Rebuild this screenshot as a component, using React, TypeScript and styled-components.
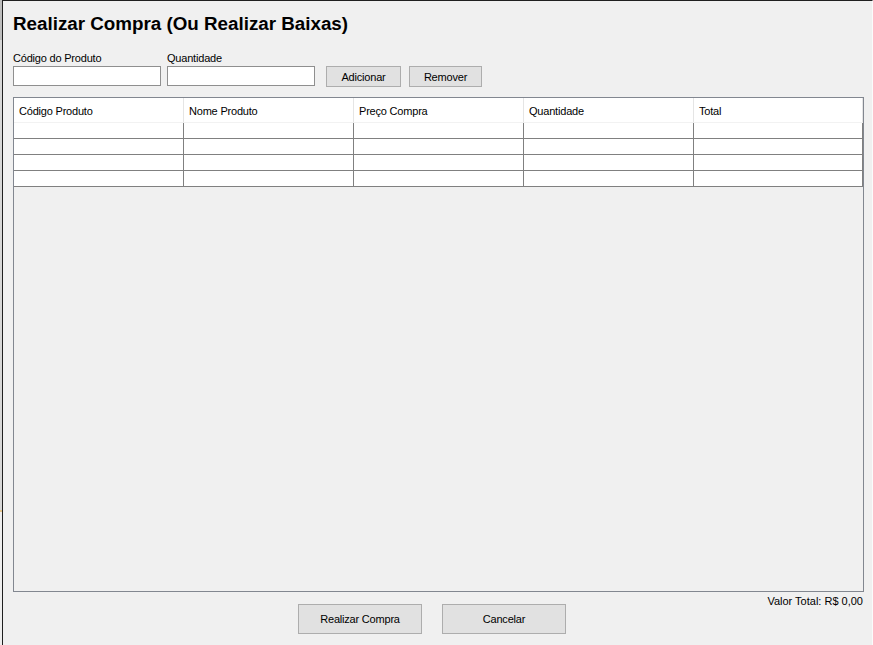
import React from 'react'
import styled, { createGlobalStyle } from 'styled-components'

const GlobalStyle = createGlobalStyle`
  html, body {
    margin: 0;
    padding: 0;
    background: #f0f0f0;
  }
  body {
    font-family: 'Liberation Sans', Arial, sans-serif;
    font-size: 11px;
    color: #000;
  }
`

const columns = ['Código Produto', 'Nome Produto', 'Preço Compra', 'Quantidade', 'Total']
const emptyRows = [0, 1, 2, 3]

const Desktop = styled.div`
  display: flex;
  width: 873px;
  height: 645px;
  overflow: hidden;
`

const Sliver = styled.div`
  width: 2px;
  background: linear-gradient(
    to bottom,
    #bdbdbd 0,
    #bdbdbd 40px,
    #d6d6d6 40px,
    #d6d6d6 510px,
    #e6c48a 510px,
    #e6c48a 512px,
    #eeeeee 512px
  );
`

const Window = styled.div`
  flex: 1;
  display: flex;
  flex-direction: column;
  background: #f0f0f0;
  border-top: 1px solid #1f1f1f;
  border-left: 1px solid #1f1f1f;
  border-right: 1px solid #fbfbfb;
  padding: 12px 8px 0 10px;
`

const Title = styled.h1`
  margin: 0;
  font-family: 'Liberation Sans', Arial, sans-serif;
  font-size: 18.8px;
  line-height: 22px;
  font-weight: 700;
  color: #000;
`

const FormRow = styled.div`
  display: flex;
  align-items: flex-end;
  margin-top: 17px;
`

const Field = styled.div<{ $gap?: number }>`
  display: flex;
  flex-direction: column;
  margin-right: ${(p) => p.$gap ?? 6}px;
`

const Label = styled.label`
  font-size: 11px;
  line-height: 13px;
  letter-spacing: -0.2px;
  margin-bottom: 1px;
`

const TextInput = styled.input`
  box-sizing: border-box;
  width: 148px;
  height: 20px;
  margin: 0;
  padding: 0 3px;
  border: 1px solid #8f8f8f;
  background: #fff;
  font-family: 'Liberation Sans', Arial, sans-serif;
  font-size: 11px;
  outline: none;
`

const SmallButton = styled.button<{ $w: number }>`
  box-sizing: border-box;
  width: ${(p) => p.$w}px;
  height: 21px;
  margin: 0 8px -1px 0;
  padding: 0;
  border: 1px solid #adadad;
  background: #e1e1e1;
  font-family: 'Liberation Sans', Arial, sans-serif;
  font-size: 11px;
  letter-spacing: -0.2px;
  color: #000;
`

const Table = styled.div`
  box-sizing: border-box;
  margin-top: 11px;
  width: 851px;
  height: 495px;
  border: 1px solid #828790;
  background: #f0f0f0;
  display: flex;
  flex-direction: column;
`

const Grid = styled.div`
  display: grid;
  grid-template-columns: repeat(4, 170px) 169px;
`

const HeadCell = styled.div`
  box-sizing: border-box;
  height: 25px;
  padding-left: 5px;
  display: flex;
  align-items: center;
  background: #fff;
  border-right: 1px solid #e5e5e5;
  border-bottom: 1px solid #f2f2f2;
  font-size: 11px;
  letter-spacing: -0.2px;
  padding-top: 1px;
`

const BodyCell = styled.div`
  box-sizing: border-box;
  height: 16px;
  background: #fff;
  border-right: 1px solid #808080;
  border-bottom: 1px solid #808080;
`

const TotalLine = styled.div`
  margin-top: 3px;
  width: 850px;
  text-align: right;
  font-size: 11px;
  line-height: 12px;
`

const ButtonRow = styled.div`
  display: flex;
  gap: 20px;
  margin-top: -3px;
  padding-left: 285px;
`

const BigButton = styled.button`
  box-sizing: border-box;
  width: 124px;
  height: 30px;
  margin: 0;
  padding: 0;
  border: 1px solid #adadad;
  background: #e1e1e1;
  font-family: 'Liberation Sans', Arial, sans-serif;
  font-size: 11px;
  letter-spacing: -0.2px;
  color: #000;
`

const App: React.FC = () => {
  return (
    <>
      <GlobalStyle />
      <Desktop>
        <Sliver />
        <Window>
          <Title>Realizar Compra (Ou Realizar Baixas)</Title>

          <FormRow>
            <Field>
              <Label>Código do Produto</Label>
              <TextInput type="text" />
            </Field>
            <Field $gap={11}>
              <Label>Quantidade</Label>
              <TextInput type="text" />
            </Field>
            <SmallButton $w={75}>Adicionar</SmallButton>
            <SmallButton $w={73}>Remover</SmallButton>
          </FormRow>

          <Table>
            <Grid>
              {columns.map((c) => (
                <HeadCell key={c}>{c}</HeadCell>
              ))}
              {emptyRows.map((r) =>
                columns.map((c) => <BodyCell key={`${r}-${c}`} />)
              )}
            </Grid>
          </Table>

          <TotalLine>Valor Total: R$ 0,00</TotalLine>
          <ButtonRow>
            <BigButton>Realizar Compra</BigButton>
            <BigButton>Cancelar</BigButton>
          </ButtonRow>
        </Window>
      </Desktop>
    </>
  )
}

export default App
